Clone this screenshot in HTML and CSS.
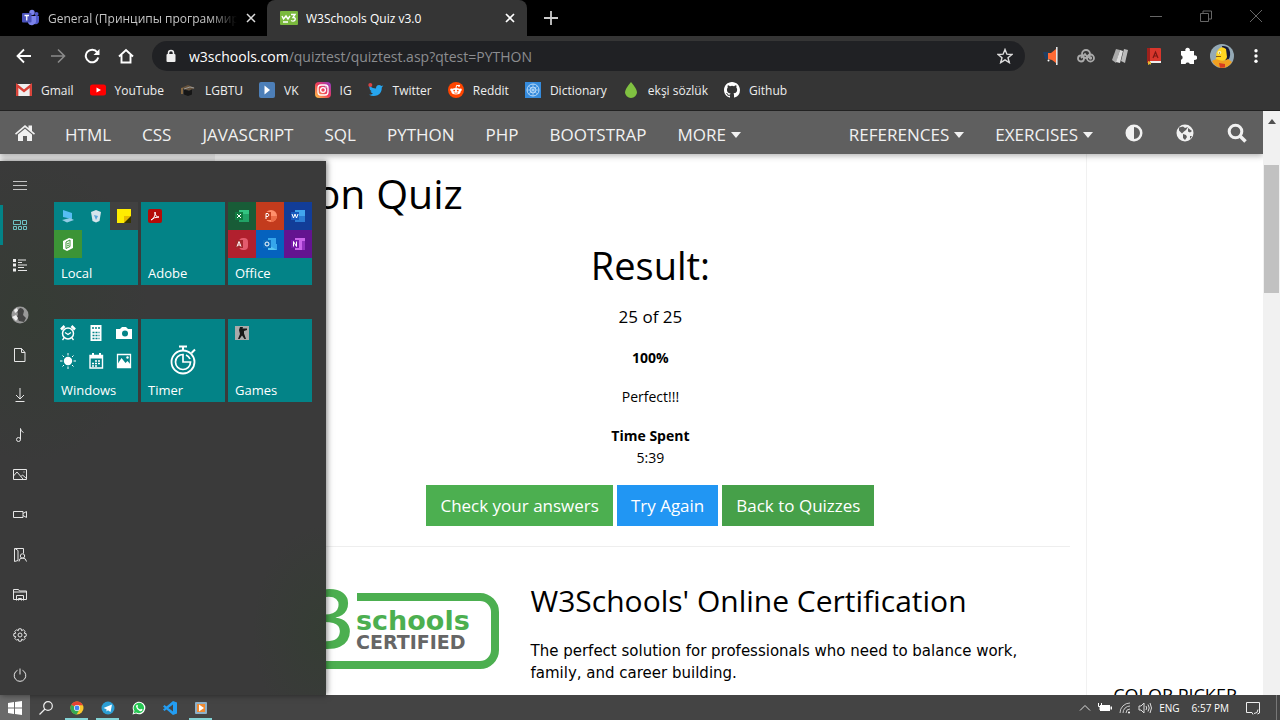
FILE: index.html
```html
<!DOCTYPE html>
<html lang="en">
<head>
<meta charset="utf-8">
<title>W3Schools Quiz v3.0</title>
<link rel="stylesheet" href="styles.css">
</head>
<body>
<div class="desktop">
  <div class="tabstrip">
    <div class="tab">
      <svg class="i18" viewBox="0 0 18 18"><circle cx="14.500" cy="5" r="2" fill="#5059c9"/><circle cx="10" cy="3.500" r="2.700" fill="#7b83eb"/><path d="M11 7h6v5a3 3 0 0 1-4 3z" fill="#5059c9"/><path d="M6 7h8v6a4.300 4.300 0 0 1-8 1z" fill="#7b83eb"/><rect x="0" y="4" width="9.500" height="9.500" rx="1" fill="#4b53bc"/><path d="M2.500 6.500h4.500M4.750 6.500v5" stroke="#fff" stroke-width="1.300"/></svg>
      <span class="tab-title faded">General (Принципы программирования)</span>
      <button class="bare" aria-label="Close tab"><svg class="i12" viewBox="0 0 12 12"><path d="M2 2l8 8M10 2l-8 8" stroke="#ddd" stroke-width="1.500"/></svg></button>
    </div>
    <div class="tab active">
      <svg class="i18" viewBox="0 0 18 18"><rect y="2" width="18" height="14" rx="1" fill="#7ab83d"/><path d="M2 7l1.500 3L6 7l2 3 2-3M11 5.500h4l-2 3q3 0 2 2.500-1.500 2-4 .5M3 13h5" fill="none" stroke="#fff" stroke-width="1.400"/></svg>
      <span class="tab-title">W3Schools Quiz v3.0</span>
      <button class="bare" aria-label="Close tab"><svg class="i12" viewBox="0 0 12 12"><path d="M2 2l8 8M10 2l-8 8" stroke="#fff" stroke-width="1.700"/></svg></button>
    </div>
    <button class="bare new-tab" aria-label="New tab"><svg class="i14" viewBox="0 0 14 14"><path d="M7 0v14M0 7h14" stroke="#ccc" stroke-width="1.800"/></svg></button>
    <div class="window-controls">
      <button class="bare" aria-label="Minimize"><svg class="i12" viewBox="0 0 12 12"><path d="M0 6.500h12" stroke="#666"/></svg></button>
      <button class="bare" aria-label="Restore"><svg class="i12" viewBox="0 0 12 12"><path d="M.5 3.500h8v8h-8zM3 3V1h8.500v8H9" fill="none" stroke="#666"/></svg></button>
      <button class="bare" aria-label="Close"><svg class="i12" viewBox="0 0 12 12"><path d="M0 0l12 12M12 0L0 12" stroke="#666"/></svg></button>
    </div>
  </div>

  <div class="toolbar">
    <button class="tool" aria-label="Back"><svg class="i16" viewBox="0 0 16 16"><path d="M15 8H2M8 1.500L1.500 8 8 14.500" fill="none" stroke="#fff" stroke-width="1.800"/></svg></button>
    <button class="tool" aria-label="Forward"><svg class="i16" viewBox="0 0 16 16"><path d="M1 8h13M8 1.500L14.500 8 8 14.500" fill="none" stroke="#8b8b8b" stroke-width="1.600"/></svg></button>
    <button class="tool" aria-label="Reload"><svg class="i16" viewBox="0 0 16 16"><path d="M13.200 4.300A6.300 6.300 0 1 0 14.200 9.500" fill="none" stroke="#fff" stroke-width="2"/><path d="M15.500 1v6h-6z" fill="#fff"/></svg></button>
    <button class="tool" aria-label="Home"><svg class="i16" viewBox="0 0 16 16"><path d="M1 8.500L8 2l7 6.500M3.500 7v7.500h9V7" fill="none" stroke="#fff" stroke-width="1.900"/></svg></button>
    <div class="omnibox">
      <svg class="i14" viewBox="0 0 14 14"><rect x="2.500" y="5" width="9" height="8" rx="1" fill="#eee"/><path d="M4.500 6V4a2.500 2.500 0 0 1 5 0v2" fill="none" stroke="#eee" stroke-width="1.500"/></svg>
      <span class="url"><b>w3schools.com</b>/quiztest/quiztest.asp?qtest=PYTHON</span>
      <button class="bare" aria-label="Bookmark this page"><svg class="i16" viewBox="0 0 16 16"><path d="M8 1.500l1.900 4.700 5 .3-3.900 3.200 1.300 4.900L8 11.800l-4.300 2.800L5 9.700 1.100 6.500l5-.3z" fill="none" stroke="#ddd" stroke-width="1.400"/></svg></button>
    </div>
    <div class="extensions">
      <button class="tool" aria-label="Volume"><svg class="i18" viewBox="0 0 18 18"><path d="M0 5h6v7H2z" fill="#1d3f63"/><path d="M5 6h3l5-4v14l-4-3-4-1z" fill="#ff6a33"/><path d="M13.800 0v18" stroke="#eee" stroke-width="1.500"/><circle cx="5.500" cy="13.500" r="1" fill="#fff"/></svg></button>
      <button class="tool" aria-label="Links"><svg class="i18" viewBox="0 0 18 18"><g fill="none" stroke="#aaa" stroke-width="1.800"><circle cx="4" cy="11.500" r="3"/><circle cx="9" cy="7" r="4"/><circle cx="13.500" cy="11" r="3.500"/><circle cx="13.500" cy="11" r=".8"/><path d="M4 11l4-4 3 4"/></g></svg></button>
      <button class="tool" aria-label="Reader"><svg class="i18" viewBox="0 0 18 18"><path d="M5 2l4 1-4 13-4-3z" fill="#aaa"/><path d="M9 3l3 1-3 12-4-1z" fill="#ddd"/><path d="M13 2l4 1-3 13-4-2z" fill="#bbb"/></svg></button>
      <button class="tool" aria-label="Dictionary extension"><svg class="i18" viewBox="0 0 18 18"><rect x="2" y="1" width="14" height="15" rx="1" fill="#d8362c"/><path d="M2 1h3v16l-3-2z" fill="#9e211c"/><path d="M5 14h11v2H5z" fill="#eee"/><path d="M3 14v4l2-1 1 1v-3z" fill="#e6b933"/><path d="M8 11l2.500-6 2.500 6M9 9h3" fill="none" stroke="#7b1713" stroke-width="1.200"/></svg></button>
      <button class="tool" aria-label="Extensions"><svg class="i18" viewBox="0 0 18 18"><path d="M2 4h4.500a2.300 2.300 0 1 1 4.200 0H15v4.500a2.300 2.300 0 1 1 0 4.200V17h-4.200a2.300 2.300 0 0 0-4.300 0H2v-4.300a2.300 2.300 0 0 0 0-4.400z" fill="#fff"/></svg></button>
      <button class="tool" aria-label="Profile"><svg class="i24" viewBox="0 0 24 24"><circle cx="12" cy="12" r="12" fill="#94a9b5"/><path d="M12 2q7-1 8 6 1 7-4 9l-3-4z" fill="#171a38"/><path d="M8 6q3-5 8-1l1 8q-1 4-5 4-3 1-6-1-1-2 1-3-2-3 1-7z" fill="#ffd521"/><path d="M2 17q4-3 7-1 5 2 9-1l4 3q-4 6-10 6-7-1-10-7z" fill="#f0a020"/><path d="M9 19l6 1v3.500l-5 .2z" fill="#d63c20"/><circle cx="9.500" cy="8.500" r="1.800" fill="#f5f0b0"/><path d="M6 12.500h5M9 9h1" stroke="#8a5a10"/></svg></button>
      <button class="tool" aria-label="Menu"><svg class="i16" viewBox="0 0 16 16"><g fill="#fff"><circle cx="8" cy="2.800" r="1.700"/><circle cx="8" cy="8" r="1.700"/><circle cx="8" cy="13.200" r="1.700"/></g></svg></button>
    </div>
  </div>

  <nav class="bookmarks" aria-label="Bookmarks">
    <a href="#"><svg class="i16" viewBox="0 0 16 16"><rect y="2" width="16" height="12" rx="1" fill="#eee"/><path d="M1.200 14V3.500L8 9l6.800-5.500V14" fill="none" stroke="#d93f35" stroke-width="2.300"/></svg>Gmail</a>
    <a href="#"><svg class="i16" viewBox="0 0 16 16"><rect y="2.500" width="16" height="11" rx="2.500" fill="#f00"/><path d="M6.500 5.500v5L11 8z" fill="#fff"/></svg>YouTube</a>
    <a href="#"><svg class="i16" viewBox="0 0 16 16"><path d="M1 6l7-3 7 3-6 2.500z" fill="#67533c"/><path d="M4 7.500v5l4 1.500 4-1.500v-5L9 9z" fill="#161616"/><path d="M2 6v6" stroke="#a07a48" stroke-width="1.500"/><path d="M4 7l6-2 4 1" stroke="#999" fill="none"/></svg>LGBTU</a>
    <a href="#"><svg class="i16" viewBox="0 0 16 16"><rect width="16" height="16" rx="2" fill="#4d7fb8"/><path d="M5.500 3.500v9L11 8z" fill="#fff"/></svg>VK</a>
    <a href="#"><svg class="i16" viewBox="0 0 16 16"><defs><linearGradient id="ig" x1="0" y1="1" x2="1" y2="0"><stop offset="0" stop-color="#ffcb45"/><stop offset=".5" stop-color="#ef3c59"/><stop offset="1" stop-color="#8a3ac8"/></linearGradient></defs><rect width="16" height="16" rx="4" fill="url(#ig)"/><rect x="3" y="3" width="10" height="10" rx="3" fill="none" stroke="#fff" stroke-width="1.300"/><circle cx="8" cy="8" r="2.400" fill="none" stroke="#fff" stroke-width="1.300"/><circle cx="11" cy="5" r=".7" fill="#fff"/></svg>IG</a>
    <a href="#"><svg class="i16" viewBox="0 0 16 16"><path d="M1 3q3 3.500 7 3.500Q8 3 11 3q1.500 0 2.300 1l2-.5-1.500 2Q14 11 9.500 13.300 5 15 1 12.800q2.500 0 4-1.300-2-.4-2.500-2.200h1.300Q1.500 8.500 1.500 6z" fill="#26a5ee"/><circle cx="2.300" cy="3" r="2" fill="#d84343"/></svg>Twitter</a>
    <a href="#"><svg class="i16" viewBox="0 0 16 16"><circle cx="8" cy="8" r="8" fill="#ff4500"/><ellipse cx="8" cy="9.300" rx="4.700" ry="3.300" fill="#fff"/><circle cx="3.500" cy="7.700" r="1.300" fill="#fff"/><circle cx="12.500" cy="7.700" r="1.300" fill="#fff"/><circle cx="11" cy="3.800" r="1.100" fill="#fff"/><path d="M8 6l.6-2.700 2.400.5" stroke="#fff" fill="none"/><circle cx="6.200" cy="8.600" r=".9" fill="#ff4500"/><circle cx="9.800" cy="8.600" r=".9" fill="#ff4500"/><path d="M6 10.700q2 1.200 4 0" stroke="#ff4500" fill="none" stroke-width=".7"/></svg>Reddit</a>
    <a href="#"><svg class="i16" viewBox="0 0 16 16"><rect width="16" height="16" fill="#358bdc"/><g fill="none" stroke="#b5d8f8"><circle cx="8" cy="8" r="6"/><circle cx="8" cy="8" r="3"/><path d="M3.500 4l9 8M12.500 4l-9 8M8 2v12M2 8h12" stroke-width=".7"/></g></svg>Dictionary</a>
    <a href="#"><svg class="i16" viewBox="0 0 16 16"><path d="M8 0q6 7 6 10.300a6 5.700 0 0 1-12 0Q2 7 8 0z" fill="#80c141"/></svg>ekşi sözlük</a>
    <a href="#"><svg class="i16" viewBox="0 0 16 16"><path fill="#fff" d="M8 0C3.580 0 0 3.580 0 8c0 3.540 2.290 6.530 5.470 7.590.4.070.55-.17.55-.38v-1.490c-2.010.37-2.530-.49-2.690-.94-.09-.23-.48-.94-.82-1.130-.28-.15-.68-.52-.01-.53.63-.01 1.080.58 1.230.82.720 1.210 1.870.87 2.330.66.070-.52.280-.87.510-1.070-1.780-.2-3.640-.89-3.640-3.950 0-.87.310-1.590.82-2.150-.08-.2-.36-1.020.08-2.120 0 0 .67-.21 2.200.82a7.600 7.600 0 0 1 4 0c1.530-1.040 2.200-.82 2.200-.82.440 1.100.160 1.920.08 2.120.51.560.82 1.270.82 2.150 0 3.070-1.870 3.750-3.650 3.950.29.250.54.730.54 1.480v2.200c0 .21.150.46.550.38A8 8 0 0 0 16 8c0-4.420-3.580-8-8-8z"/></svg>Github</a>
  </nav>

  <div class="viewport">
    <div class="page">
      <nav class="site-nav" aria-label="Site">
        <a href="#" class="home" aria-label="Home"><svg class="i20" viewBox="0 0 20 20"><path d="M0 10.500L10 2l3.500 3V2.500H17V8l3 2.500-1 1.200-9-7.500-9 7.500z"/><path d="M3 11.500L10 5.700l7 5.800V18h-5v-5H8v5H3z"/></svg></a>
        <a href="#">HTML</a><a href="#">CSS</a><a href="#">JAVASCRIPT</a><a href="#">SQL</a><a href="#">PYTHON</a><a href="#">PHP</a><a href="#">BOOTSTRAP</a>
        <a href="#">MORE<svg class="caret" viewBox="0 0 10 6"><path d="M0 0h10L5 6z"/></svg></a>
        <span class="spacer"></span>
        <a href="#">REFERENCES<svg class="caret" viewBox="0 0 10 6"><path d="M0 0h10L5 6z"/></svg></a>
        <a href="#">EXERCISES<svg class="caret" viewBox="0 0 10 6"><path d="M0 0h10L5 6z"/></svg></a>
        <a href="#" class="glyph" aria-label="Contrast"><svg class="i18" viewBox="0 0 18 18"><path fill-rule="evenodd" d="M9 .5a8.500 8.500 0 1 0 0 17 8.500 8.500 0 0 0 0-17zM9 3v12A6 6 0 0 0 9 3z"/></svg></a>
        <a href="#" class="glyph" aria-label="Translate"><svg class="i18" viewBox="0 0 18 18"><circle cx="9" cy="9" r="8.500"/><path d="M3 3.500l4-1 2 1.500 3-1-2 3-2 1.500-2 2-3-3zM12 4l4 3-2 1.500-2-1zM7 10l3 1 1 2-2 3-2-2zM14 12l2 0-2 3z" fill="#5f5f5f"/></svg></a>
        <a href="#" class="glyph" aria-label="Search"><svg class="i20" viewBox="0 0 20 20"><circle cx="8.500" cy="8.500" r="6.300" fill="none" stroke="#f1f1f1" stroke-width="3"/><path d="M13 13l5.500 5.500" stroke="#f1f1f1" stroke-width="3.600"/></svg></a>
      </nav>
      <div class="columns">
        <div class="side-left"></div>
        <main>
          <h1>Python Quiz</h1>
          <section class="result">
            <h2>Result:</h2>
            <p class="score">25 of 25</p>
            <p><b>100%</b></p>
            <p>Perfect!!!</p>
            <p><b>Time Spent</b><br>5:39</p>
            <div class="actions">
              <button class="btn">Check your answers</button>
              <button class="btn blue">Try Again</button>
              <button class="btn dark">Back to Quizzes</button>
            </div>
          </section>
          <hr>
          <section class="cert">
            <svg class="cert-logo" viewBox="0 0 268 84" role="img" aria-label="Schools certified">
              <path d="M126 10h123a15 15 0 0 1 15 15v38a15 15 0 0 1-15 15H40" fill="none" stroke="#4caf50" stroke-width="8"/>
              <text x="76" y="61" class="logo-three">3</text>
              <text x="125" y="43" class="logo-name">schools</text>
              <text x="125" y="62" class="logo-sub">CERTIFIED</text>
            </svg>
            <div class="cert-text">
              <h3>W3Schools' Online Certification</h3>
              <p>The perfect solution for professionals who need to balance work, family, and career building.</p>
            </div>
          </section>
        </main>
        <aside class="side-right"><h4>COLOR PICKER</h4></aside>
      </div>
    </div>
    <div class="scrollbar"><svg class="arrow" viewBox="0 0 8 5"><path d="M0 5h8L4 0z" fill="#505050"/></svg><div class="thumb"></div></div>
  </div>

  <footer class="taskbar">
    <button class="task start" aria-label="Start"><svg class="i14" viewBox="0 0 14 14"><path d="M0 2l6-1v5.500H0zM7 .9L14 0v6.500H7zM0 7.500h6V13l-6-1zM7 7.500h7V14l-7-.9z" fill="#fff"/></svg></button>
    <button class="task" aria-label="Search"><svg class="i14" viewBox="0 0 14 14"><circle cx="9" cy="5" r="4.300" fill="none" stroke="#eee" stroke-width="1.200"/><path d="M6 8L.5 13.500" stroke="#eee" stroke-width="1.200"/></svg></button>
    <button class="task open" aria-label="Chrome"><svg class="i14" viewBox="0 0 14 14"><circle cx="7" cy="7" r="6.500" fill="#f9c92d"/><path d="M7 7L1.400 3.700a6.500 6.500 0 0 1 11.500.5H7z" fill="#e54335"/><path d="M1.400 3.700A6.500 6.500 0 0 0 6.500 13.500L9.500 8.500 7 7z" fill="#35a853"/><circle cx="7" cy="7" r="3" fill="#fff"/><circle cx="7" cy="7" r="2.400" fill="#4285f4"/></svg></button>
    <button class="task open" aria-label="Telegram"><svg class="i14" viewBox="0 0 14 14"><circle cx="7" cy="7" r="6.500" fill="#2c9ed4"/><path d="M2.500 7L11 3.500 9.500 11 7 9.300l-1.500 1.200V8.300z" fill="#fff"/></svg></button>
    <button class="task" aria-label="WhatsApp"><svg class="i14" viewBox="0 0 14 14"><path d="M.5 13.500l1-3.500A6.300 6.300 0 1 1 4 12.500z" fill="#fff"/><path d="M1.700 12.300l.8-2.500A5.200 5.200 0 1 1 4.500 11.600z" fill="#27c653"/><path d="M4.500 4q.8-1 1.500.8L5.500 6q1 2 2.700 2.500l1-.8 1.500 1q-1 2-3 1.200Q4.500 8.700 4 5.500z" fill="#fff"/></svg></button>
    <button class="task" aria-label="Visual Studio Code"><svg class="i14" viewBox="0 0 14 14"><path d="M10 0l4 1.500v11L10 14 0 5.500 1.500 4l8.500 6.500v-7L1.500 10 0 8.500z" fill="#239df2"/></svg></button>
    <button class="task open" aria-label="Media player"><svg class="i14" viewBox="0 0 14 14"><rect x="1" y="1" width="12" height="12" rx="1" fill="#8db0c8"/><rect x="3" y="3" width="8" height="8" fill="#ef8a31"/><path d="M5 3.500v7L10 7z" fill="#fff"/></svg></button>
    <div class="tray">
      <svg class="i12" viewBox="0 0 12 12"><path d="M1 8.500l5-5 5 5" fill="none" stroke="#ddd"/></svg>
      <svg class="i14" viewBox="0 0 14 14"><path d="M2 4h10v6H2z" fill="#fff"/><path d="M12.500 5.500H14v3h-1.500z" fill="#fff"/><path d="M.5 2v3.500h3V2M2 5v4" fill="none" stroke="#fff"/></svg>
      <svg class="i12" viewBox="0 0 12 12"><g fill="none" stroke="#ccc"><path d="M1 11A10 10 0 0 1 11 1M4 11a7 7 0 0 1 7-7M7 11a4 4 0 0 1 4-4"/></g><circle cx="10" cy="10.500" r="1" fill="#fff"/></svg>
      <svg class="i14" viewBox="0 0 14 14"><path d="M1 5h2l3-3v10L3 9H1zM8 5q1.500 2 0 4M10 3.500q2.500 3.500 0 7M12 2q3 5 0 10" fill="none" stroke="#ddd"/></svg>
      <span>ENG</span>
      <span class="clock">6:57 PM</span>
      <svg class="i14" viewBox="0 0 14 14"><path d="M.5 1.500h13V8M.5 1.500v10H6l1 2M13.500 8v4l-2 1M8 12.500q4 0 4-4" fill="none" stroke="#eee"/></svg>
    </div>
  </footer>

  <div class="start-menu">
    <div class="rail">
      <button aria-label="Expand"><svg class="i14" viewBox="0 0 14 14"><path d="M0 3.500h14M0 7.500h14M0 11.500h14" opacity=".8"/></svg></button>
      <button class="current" aria-label="Pinned tiles"><svg class="i14" viewBox="0 0 14 14"><path d="M.5 2.500h7v4h-7zM9.500 2.500h4v4h-4zM.5 8.500h3v3h-3zM5.500 8.500h3v3h-3zM10.500 8.500h3v3h-3z"/></svg></button>
      <button aria-label="All apps"><svg class="i14" viewBox="0 0 14 14"><path d="M5 2h8M5 4.500h4M5 7h9M5 9.500h6M5 12.500h9"/><path d="M0 1h3v3H0zM0 5.500h3v3H0zM0 10.500h3v3H0z" fill="#eee" stroke="none"/></svg></button>
      <button class="push" aria-label="Account"><svg class="i18" viewBox="0 0 18 18"><circle cx="9" cy="9" r="8.500" fill="#999" stroke="none"/><path d="M9 2q3 0 4 3l-1 4 3 3-2 4-5-1-2-4 1-3-1-3z" fill="#444" stroke="none"/><path d="M1 11l4-2 2 3-2 3zM3 4l3-2 1 3-3 2z" fill="#eee" stroke="none"/></svg></button>
      <button aria-label="Documents"><svg class="i14" viewBox="0 0 14 14"><path d="M1.500.5h7l3.500 4v9H1.500zM8.500.5v4H12"/></svg></button>
      <button aria-label="Downloads"><svg class="i14" viewBox="0 0 14 14"><path d="M7 0v10.500M3 7l4 4 4-4M2.500 13.500h9"/></svg></button>
      <button aria-label="Music"><svg class="i14" viewBox="0 0 14 14"><circle cx="5.500" cy="11.500" r="2"/><path d="M7.500 11.500V.5q0 2.500 3 4"/></svg></button>
      <button aria-label="Pictures"><svg class="i14" viewBox="0 0 14 14"><path d="M.5 1.500h13v10H.5zM.5 8l3.500-4 6 7M8 8.500l1.500-1.500 4 3.500"/><path d="M10.500 4h1"/></svg></button>
      <button aria-label="Videos"><svg class="i14" viewBox="0 0 14 14"><path d="M.5 3.500h9.500v6H.5zM10 5.500l3.500-2v6l-3.500-2"/></svg></button>
      <button aria-label="Network"><svg class="i14" viewBox="0 0 14 14"><path d="M5 12.500L1.500 13.500V.500h9v5M2 .5l3 2v10"/><circle cx="9.500" cy="8" r="2.200"/><path d="M6 13.500q0-3.500 3.500-3.500t4 3.500"/></svg></button>
      <button aria-label="Personal folder"><svg class="i14" viewBox="0 0 14 14"><path d="M.5 11.500v-10h5l1 1.500h7v8.500zM3.500 12.500V7.500h7v5M5.500 12.500v-2h3v2M.5 4h13"/></svg></button>
      <button aria-label="Settings"><svg class="i14" viewBox="0 0 14 14"><circle cx="7" cy="7" r="2"/><path d="M5.800.8h2.400l.4 1.900 1.700-1 1.900 1.800-1 1.700 2 .5v2.500l-2 .5 1 1.700-1.800 1.800-1.700-1-.5 2H5.800l-.5-2-1.700 1-1.800-1.800 1-1.700-2-.5V5.700l2-.5-1-1.700 1.800-1.800 1.700 1z"/></svg></button>
      <button aria-label="Power"><svg class="i14" viewBox="0 0 14 14"><path d="M7 .5v6M4.500 2.300a5.800 5.800 0 1 0 5 0"/></svg></button>
    </div>
    <div class="tiles">
      <button class="tile"><span class="minis">
        <span class="mini"><svg class="i14" viewBox="0 0 14 14"><path d="M2 1l9 3v6l-9-2z" fill="#56bdf3"/><path d="M1 11l8-2 4 2-7 2.500z" fill="#92cbe6"/></svg></span>
        <span class="mini"><svg class="i14" viewBox="0 0 14 14"><path d="M2 3l5-2 5 2-1.500 9L7 13.500 3.500 12z" fill="#d7e4ec"/><path d="M5 6l4 1-2 4z" fill="#5aa5d9"/></svg></span>
        <span class="mini note"><svg class="i14" viewBox="0 0 14 14"><path d="M0 0h14v14H0z" fill="#ffec00"/><path d="M14 7v7H7V7z" fill="#363400"/><path d="M7 7h7l-7 7z" fill="#e6ba00"/></svg></span>
        <span class="mini green"><svg class="i14" viewBox="0 0 14 14"><path d="M2 4l6-3 4 1v9l-6 3-4-2z" fill="#fff"/><path d="M5 5l4-2v6.500l-4 2zM6 7l2-1M6 9l2-1" fill="none" stroke="#3c9436"/></svg></span>
      </span><span class="label">Local</span></button>
      <button class="tile"><span class="minis"><span class="mini"><svg class="i14" viewBox="0 0 14 14"><rect width="14" height="14" rx="2" fill="#b50b08"/><path d="M7 3v3q-1 4-4 5 3-3 8-3-4 0-4-5" fill="none" stroke="#fff"/></svg></span></span><span class="label">Adobe</span></button>
      <button class="tile"><span class="minis">
        <span class="mini excel"><svg class="i14" viewBox="0 0 14 14"><rect x="4" y="1" width="10" height="12" fill="#33c481"/><path d="M4 5h10v8H4z" fill="#21a366"/><rect y="3" width="8" height="8" fill="#107c41"/><path d="M2 5l4 4M6 5L2 9" stroke="#fff"/></svg></span>
        <span class="mini ppt"><svg class="i14" viewBox="0 0 14 14"><circle cx="8" cy="7" r="6" fill="#ff8f6b"/><path d="M8 7h6a6 6 0 0 1-6 6z" fill="#ed6c47"/><rect y="3" width="8" height="8" fill="#c43e1c"/><path d="M3 10V4.500h2q2 1.500 0 3H3" stroke="#fff" fill="none"/></svg></span>
        <span class="mini word"><svg class="i14" viewBox="0 0 14 14"><rect x="4" y="1" width="10" height="12" fill="#41a5ee"/><path d="M4 7h10v6H4z" fill="#2b7cd3"/><rect y="3" width="8" height="8" fill="#185abd"/><path d="M1 5l1.500 4L4 5l1.500 4L7 5" stroke="#fff" fill="none"/></svg></span>
        <span class="mini access"><svg class="i14" viewBox="0 0 14 14"><rect x="4" y="1" width="9" height="12" rx="4" fill="#e35b6d"/><rect y="3" width="8" height="8" fill="#a4262c"/><path d="M2 9.500L4 4.500l2 5M3 8h2" stroke="#fff" fill="none"/></svg></span>
        <span class="mini outlook"><svg class="i14" viewBox="0 0 14 14"><path d="M5 1h8v6h1v6H5z" fill="#35a6eb"/><path d="M5 8l9 5H5z" fill="#56c5f2"/><rect y="3" width="8" height="8" fill="#0f6cbd"/><circle cx="4" cy="7" r="2" stroke="#fff" fill="none"/></svg></span>
        <span class="mini onenote"><svg class="i14" viewBox="0 0 14 14"><path d="M4 1h10v12H4z" fill="#ca64ea"/><path d="M11 4h3v9h-3z" fill="#9332bf"/><rect y="3" width="8" height="8" fill="#7719aa"/><path d="M2.500 9.500v-5l3 5v-5" stroke="#fff" fill="none"/></svg></span>
      </span><span class="label">Office</span></button>
      <button class="tile"><span class="minis">
        <span class="mini"><svg class="i16" viewBox="0 0 16 16"><circle cx="8" cy="8.500" r="5.500" fill="none" stroke="#fff" stroke-width="1.500"/><path d="M1 4.500L4.500 1M15 4.500L11.500 1" stroke="#fff" stroke-width="2.500"/><path d="M5 7.500l3 2 3-2M4 13l-1.500 2M12 13l1.500 2" stroke="#fff" fill="none" stroke-width="1.300"/></svg></span>
        <span class="mini"><svg class="i16" viewBox="0 0 16 16"><path d="M2.500 0h11v16h-11z" fill="#fff"/><path d="M4 3h8M4.500 7.500h7M4.500 10.500h7M4.500 13.500h7" stroke="#038387" stroke-width="1.500" stroke-dasharray="2 1"/></svg></span>
        <span class="mini"><svg class="i16" viewBox="0 0 16 16"><path d="M0 4h4l2-2h4l2 2h4v10H0z" fill="#fff"/><circle cx="9" cy="8.500" r="3" fill="#038387"/></svg></span>
        <span class="mini"><svg class="i16" viewBox="0 0 16 16"><circle cx="8" cy="8" r="4.200" fill="#fff"/><path d="M8 0v2.500M8 13.500V16M0 8h2.500M13.500 8H16M2.500 2.500l1.500 1.500M12 12l1.500 1.500M13.500 2.500L12 4M4 12l-1.500 1.500" stroke="#fff"/></svg></span>
        <span class="mini"><svg class="i16" viewBox="0 0 16 16"><path d="M2 2.500h12.500v12.500H2z" fill="none" stroke="#fff" stroke-width="1.400"/><path d="M2 2h13v3.500H2zM4 0h2v3H4zM11 0h2v3h-2z" fill="#fff"/><path d="M7 8h6M4 10.500h9M4 13h6" stroke="#fff" stroke-width="1.600" stroke-dasharray="2 1"/></svg></span>
        <span class="mini"><svg class="i16" viewBox="0 0 16 16"><path d="M1.500 1.500h13v13h-13z" fill="none" stroke="#fff" stroke-width="1.300"/><path d="M1 12l4.500-7 4 5 2-2 3.500 4v3H1z" fill="#fff"/><circle cx="11.500" cy="4.500" r="1.200" fill="#fff"/></svg></span>
      </span><span class="label">Windows</span></button>
      <button class="tile"><svg class="stopwatch" viewBox="0 0 28 30"><g fill="none" stroke="#fff"><circle cx="14" cy="17" r="11.500" stroke-width="1.800"/><path d="M14 9.500a7.500 7.500 0 1 0 7.500 7.500H14zM17 10a7.500 7.500 0 0 1 4 4" stroke-width="1.700"/><path d="M10 1.500h8M14 1.500v4M22.500 8l3.500-3.500" stroke-width="2"/></g></svg><span class="label">Timer</span></button>
      <button class="tile"><span class="minis"><span class="mini"><svg class="i14" viewBox="0 0 14 14"><rect width="14" height="14" fill="#aaa"/><path d="M5 1h3l-.5 1.500H12V4L9 5v2.500l2 5.500H9.500L7 9.500 4.500 13H3l2-5-1-4z" fill="#171717"/></svg></span></span><span class="label">Games</span></button>
    </div>
  </div>
</div>
</body>
</html>
```
FILE: styles.css
```css
* { box-sizing: border-box; }
body { margin: 0; font-family: "Open Sans", "Noto Sans", sans-serif; font-size: 14px; color: #000; }
button { font-family: inherit; border: 0; padding: 0; margin: 0; background: none; color: inherit; }
a { color: inherit; text-decoration: none; }
svg { display: block; flex: none; }
h1, h2, h3, h4, p { margin: 0; font-weight: 400; }
.i12 { width: 12px; height: 12px; }
.i14 { width: 14px; height: 14px; }
.i16 { width: 16px; height: 16px; }
.i18 { width: 18px; height: 18px; }
.i20 { width: 20px; height: 20px; }
.i24 { width: 24px; height: 24px; }

.desktop { position: relative; display: flex; flex-direction: column; height: 100vh; overflow: hidden; }

.tabstrip { display: flex; align-items: center; height: 36px; flex: none; background: #000; color: #fff; }
.tab { display: flex; align-items: center; width: 264px; height: 36px; padding: 0 7px 0 22px; gap: 8px; }
.tab.active { background: #353535; border-radius: 8px 8px 0 0; padding: 0 11px 0 13px; margin-left: 3px; width: 260px; }
.tab-title { flex: 1; font-size: 12px; white-space: nowrap; overflow: hidden; }
.faded { color: #c4c4c4; -webkit-mask-image: linear-gradient(90deg, #000 85%, transparent); mask-image: linear-gradient(90deg, #000 85%, transparent); }
.new-tab { margin-left: 17px; }
.window-controls { display: flex; gap: 38px; margin: 0 18px 4px auto; }

.toolbar { display: flex; align-items: center; height: 40px; flex: none; background: #353535; padding: 0 7px; }
.tool { display: flex; align-items: center; justify-content: center; width: 34px; height: 30px; }
.omnibox { flex: 1; display: flex; align-items: center; height: 30px; margin-left: 9px; padding: 0 12px; gap: 11px; border-radius: 15px; background: #202124; }
.url { flex: 1; font-size: 14px; color: #8c8d90; white-space: nowrap; overflow: hidden; }
.url b { font-weight: 400; color: #fff; }
.extensions { display: flex; margin-left: 10px; }

.bookmarks { display: flex; align-items: center; gap: 16px; height: 35px; flex: none; padding: 0 16px 6px; background: #353535; border-bottom: 1px solid #222; color: #eee; font-size: 12px; white-space: nowrap; }
.bookmarks a { display: flex; align-items: center; gap: 9px; }

.viewport { flex: 1; min-height: 0; display: flex; background: #fff; }
.page { flex: 1; min-width: 0; display: flex; flex-direction: column; overflow: hidden; }
.site-nav { position: relative; display: flex; align-items: center; gap: 1px; height: 43px; flex: none; background: #5f5f5f; color: #f1f1f1; fill: #f1f1f1; font-size: 17px; box-shadow: 0 2px 6px rgba(0, 0, 0, .3); white-space: nowrap; }
.site-nav a { display: flex; align-items: center; height: 100%; padding: 4px 15px 0; }
.site-nav .home { padding: 0 14px 0 15px; }
.site-nav .glyph { padding: 0 16px; }
.caret { width: 10px; height: 6px; margin-left: 5px; }
.spacer { flex: 1; }
.columns { flex: 1; min-height: 0; display: grid; grid-template-columns: 17fr 69fr 14fr; grid-template-rows: 100%; }
.side-left { background: #f1f1f1; }
main { min-width: 0; padding: 12px 16px 0; }
h1, h2 { line-height: 54px; }
h1 { font-size: 41px; }
h2 { font-size: 38px; }
.result { margin-top: 18px; text-align: center; font-size: 14px; line-height: 22px; }
.result p { margin-top: 17px; }
.result .score { margin-top: 12px; font-size: 17px; line-height: 26px; }
.actions { display: flex; justify-content: center; gap: 4px; margin-top: 16px; }
.btn { padding: 8px 14px; font-size: 17px; line-height: 25px; color: #fff; background: #4caf50; }
.btn.blue { background: #2196f3; }
.btn.dark { background: #46a049; }
hr { margin: 20px 0; border: 0; border-top: 1px solid #eee; }
.cert { display: grid; grid-template-columns: 1fr 2fr; }
.cert-logo { width: 268px; height: 84px; margin-top: 20px; }
.logo-three { font: 600 82px "Open Sans", sans-serif; fill: #4caf50; }
.logo-name { font: 700 27px "DejaVu Sans", sans-serif; fill: #4caf50; }
.logo-sub { font: 700 19px "DejaVu Sans", sans-serif; fill: #666; }
.cert-text { padding: 12px 20px; }
h3 { font-size: 30px; line-height: 44px; }
.cert-text p { margin-top: 17px; font-family: "DejaVu Sans", sans-serif; font-size: 15px; line-height: 22px; }
.side-right { display: flex; justify-content: center; align-items: flex-end; border-left: 1px solid #f1f1f1; }
h4 { font-size: 18px; line-height: 24px; margin-bottom: -12px; white-space: nowrap; }

.scrollbar { width: 17px; background: #f1f1f1; padding: 8px 1px; }
.arrow { width: 8px; height: 5px; margin: 0 auto; }
.thumb { height: 128px; margin-top: 41px; background: #c1c1c1; }

.taskbar { display: flex; height: 25px; flex: none; background: #444; color: #fff; }
.task { position: relative; display: flex; align-items: center; justify-content: center; width: 31px; height: 25px; }
.task.start { width: 30px; background: #6a6a6a; }
.task.open::after { content: ""; position: absolute; left: 4px; right: 4px; bottom: 0; height: 2px; background: #83d3d6; }
.tray { display: flex; align-items: center; gap: 7px; margin-left: auto; margin-right: 3px; padding-right: 16px; border-right: 1px solid #777; font-size: 10px; }
.clock { margin: 0 10px 0 5px; }

.start-menu { position: absolute; left: 0; top: 161px; bottom: 25px; width: 326px; display: flex; background: radial-gradient(ellipse at 100% 88%, #353d34, transparent 16%), radial-gradient(ellipse at 10% 28%, #363c35, transparent 28%), #3a3a3a; box-shadow: 1px 0 6px rgba(0, 0, 0, .5); color: #fff; }
.rail { display: flex; flex-direction: column; width: 54px; padding-top: 4px; }
.rail button { display: flex; align-items: center; justify-content: center; width: 40px; height: 40px; flex: none; }
.rail svg { fill: none; stroke: #e6e6e6; stroke-width: 1; }
.rail .current { border-left: 3px solid #038387; padding-right: 3px; }
.rail .current svg { stroke: #6fc3c5; }
.rail .push { margin-top: auto; }
.tiles { display: grid; grid-template-columns: repeat(3, 84px); grid-auto-rows: 83px; align-content: start; column-gap: 3px; row-gap: 34px; padding-top: 41px; }
.tile { display: flex; flex-direction: column; justify-content: space-between; align-items: flex-start; background: #038387; text-align: left; }
.minis { display: grid; grid-template-columns: repeat(3, 28px); grid-auto-rows: 28px; }
.mini { display: flex; align-items: center; justify-content: center; }
.note { background: #414141; }
.green { background: #3c9436; }
.excel { background: #185c37; }
.ppt { background: #c33b1d; }
.word { background: #123d98; }
.access { background: #b1202e; }
.outlook { background: #0562be; }
.onenote { background: #631390; }
.label { padding: 0 7px 3px; font-size: 13px; line-height: 18px; }
.stopwatch { width: 28px; height: 30px; margin: 26px auto 0; }
```
